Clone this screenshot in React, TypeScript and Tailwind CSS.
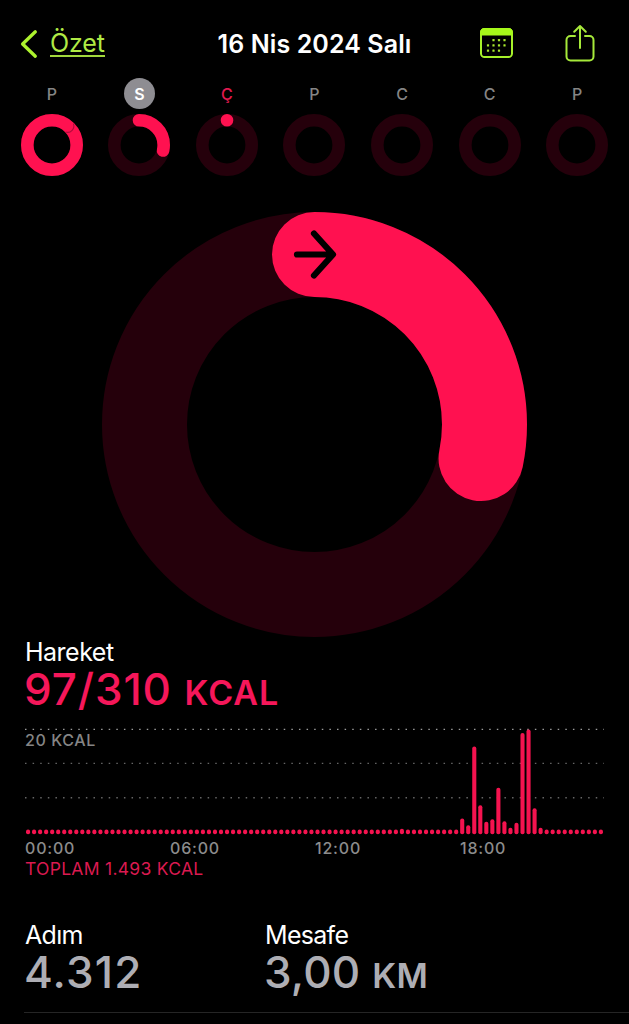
import { useState } from 'react';

interface Day {
  label: string;
  progress: number;
  today?: boolean;
}

const MOVE = '#ff1150';
const TRACK = '#25000b';

const days: Day[] = [
  { label: 'P', progress: 1.12 },
  { label: 'S', progress: 0.285 },
  { label: 'Ç', progress: 0.0001, today: true },
  { label: 'P', progress: 0 },
  { label: 'C', progress: 0 },
  { label: 'C', progress: 0 },
  { label: 'P', progress: 0 },
];

// Quarter-hour slots that rise above the idle level, in pixels
const activeSlots: Record<number, number> = {
  62: 5.5,
  72: 15.7,
  73: 9,
  74: 87.7,
  75: 29,
  76: 12.5,
  77: 15,
  78: 46.5,
  79: 13,
  80: 6.5,
  81: 11.5,
  82: 101.3,
  83: 104.7,
  84: 26,
  85: 6.5,
};

const slots = Array.from({ length: 96 }, (_, i) => activeSlots[i] ?? 4.6);

const hours = ['00:00', '06:00', '12:00', '18:00'];

interface RingProps {
  size: number;
  stroke: number;
  progress: number;
}

function Ring({ size, stroke, progress }: RingProps) {
  const c = size / 2;
  const r = (size - stroke) / 2;
  const length = 2 * Math.PI * r;
  const turn = progress * 360;

  return (
    <svg width={size} height={size} viewBox={`0 0 ${size} ${size}`} fill="none">
      <circle cx={c} cy={c} r={r} stroke={TRACK} strokeWidth={stroke} />
      {progress > 0 && (
        <circle
          cx={c}
          cy={c}
          r={r}
          stroke={MOVE}
          strokeWidth={stroke}
          strokeLinecap="round"
          strokeDasharray={progress >= 1 ? undefined : `${length * progress} ${length}`}
          transform={`rotate(-90 ${c} ${c})`}
        />
      )}
      {/* Shadow around the overlapping end of a closed ring */}
      {progress > 1 && (
        <path
          d={`M${c + 1} ${c - r - stroke / 2 + 0.8}a${stroke / 2} ${stroke / 2} 0 0 1 0 ${stroke - 1.2}`}
          stroke="#b00c3b"
          strokeWidth="1.1"
          transform={`rotate(${turn % 360} ${c} ${c})`}
        />
      )}
    </svg>
  );
}

function CalendarIcon() {
  const dots = [
    [13.5, 12.2], [19, 12.2], [24.5, 12.2],
    [8, 17.4], [13.5, 17.4], [19, 17.4], [24.5, 17.4],
    [8, 22.7], [13.5, 22.7], [19, 22.7],
  ];
  return (
    <svg width="33" height="30" viewBox="0 0 33 30" fill="none">
      <rect x="1" y="1" width="31" height="28" rx="3.6" stroke="#a6f02a" strokeWidth="2" />
      <path d="M0 7.6V4.5A4.5 4.5 0 0 1 4.5 0h24A4.5 4.5 0 0 1 33 4.5v3.1z" fill="#a6f81a" />
      {dots.map(([x, y]) => (
        <rect key={`${x}-${y}`} x={x - 1.1} y={y - 1.1} width="2.2" height="2.2" rx="0.5" fill="#a6e62c" />
      ))}
    </svg>
  );
}

function ShareIcon() {
  return (
    <svg width="30" height="38" viewBox="0 0 30 38" fill="none" stroke="#a6e93a" strokeWidth="2" strokeLinecap="round" strokeLinejoin="round">
      <path d="M10 12H5.5A4 4 0 0 0 1.5 16v16.5a4 4 0 0 0 4 4h19a4 4 0 0 0 4-4V16a4 4 0 0 0-4-4H20" />
      <path d="M15 24V2M9.2 7.8 15 2l5.8 5.8" />
    </svg>
  );
}

function MoveChart() {
  return (
    <div className="relative mt-[17px] ml-6 h-[107px]">
      <svg width="582" height="107" viewBox="0 0 582 107" fill="none">
        {[1.4, 35.4, 69.7].map((y, i) => (
          <line
            key={y}
            x1="1"
            x2="580"
            y1={y}
            y2={y}
            stroke={i === 0 ? '#9c9c9c' : '#666666'}
            strokeWidth="1.4"
            strokeDasharray="1.5 6.11"
          />
        ))}
        {slots.map((h, i) => (
          <rect key={i} x={2 + i * 6.03} y={106.2 - h} width="4.1" height={h} rx="2" fill="#f5134f" />
        ))}
      </svg>
      <span className="absolute top-[3px] left-px text-[16px] leading-[19px] font-medium tracking-[0.6px] text-[#858585]">
        20 KCAL
      </span>
    </div>
  );
}

export default function App() {
  const [selected, setSelected] = useState(1);

  return (
    <div className="h-[1024px] w-[629px] overflow-hidden bg-black font-['Inter',sans-serif] text-white">
      <header className="grid h-[78px] grid-cols-[1fr_auto_1fr] items-center px-5 pt-[9px]">
        <button type="button" className="flex items-center text-[#b0ea45]">
          <svg width="18" height="30" viewBox="0 0 18 30" fill="none">
            <path d="M15.3 2.8 2.6 15l12.7 12.2" stroke="#adf22e" strokeWidth="3.3" strokeLinecap="round" strokeLinejoin="round" />
          </svg>
          <span className="ml-3 border-b-2 border-[#a2d83c] text-[25px] leading-6 tracking-[-0.1px]">
            Özet
          </span>
        </button>
        <h1 className="text-[25px] leading-[30px] font-semibold tracking-[0.1px]">16 Nis 2024 Salı</h1>
        <div className="mr-[14px] flex items-center justify-end gap-[52px] pb-[2px]">
          <CalendarIcon />
          <ShareIcon />
        </div>
      </header>

      <nav className="grid grid-cols-7 px-2">
        {days.map((day, i) => (
          <button
            key={i}
            type="button"
            onClick={() => setSelected(i)}
            className="flex flex-col items-center gap-[5px]"
          >
            <span
              className={`flex size-[31px] items-center justify-center rounded-full text-base ${
                i === selected
                  ? 'bg-[#8e8d92] font-semibold text-white'
                  : day.today
                    ? 'font-medium text-[#e0194f]'
                    : 'font-medium text-[#858585]'
              }`}
            >
              {day.label}
            </span>
            <Ring size={62} stroke={12.6} progress={day.progress} />
          </button>
        ))}
      </nav>

      <div className="relative mt-9 flex justify-center">
        <Ring size={425} stroke={85} progress={0.282} />
        <svg className="absolute top-4 left-[290px]" width="50" height="52" viewBox="0 0 50 52" fill="none">
          <path d="M7 26.5H42M24 5.5l19 21-19 21" stroke="#000" strokeWidth="6.2" strokeLinecap="round" strokeLinejoin="round" />
        </svg>
      </div>

      <section>
        <h2 className="pl-[25px] text-[25px] leading-[30px] tracking-[-0.5px]">Hareket</h2>
        <p className="h-11 pl-6 text-[44px] leading-[44px] font-medium tracking-[0.9px] text-[#f5175a]">
          97/310 <span className="text-[34px] font-semibold tracking-[1px]">KCAL</span>
        </p>
        <MoveChart />
        <div className="mt-0.5 ml-[25px] grid w-[580px] grid-cols-4 text-[16px] leading-[22px] font-medium tracking-[0.8px] text-[#8c8c8c]">
          {hours.map((hour) => (
            <span key={hour}>{hour}</span>
          ))}
        </div>
        <p className="pl-[25px] text-[17.5px] leading-5 tracking-[0.28px] text-[#db1a50]">TOPLAM 1.493 KCAL</p>
      </section>

      <section className="mt-[41px] ml-6 flex h-[93px] border-b border-[#252525] pl-px">
        <div className="w-60">
          <h2 className="text-[25px] leading-[30px] tracking-[-0.7px]">Adım</h2>
          <p className="-ml-px text-[44px] leading-[44px] font-medium tracking-[1.2px] text-[#aeaeb4]">4.312</p>
        </div>
        <div>
          <h2 className="text-[25px] leading-[30px] tracking-[-0.7px]">Mesafe</h2>
          <p className="-ml-px h-11 text-[44px] leading-[44px] font-medium tracking-[0.2px] text-[#aeaeb4]">
            3,00 <span className="text-[34px] font-semibold">KM</span>
          </p>
        </div>
      </section>
    </div>
  );
}
